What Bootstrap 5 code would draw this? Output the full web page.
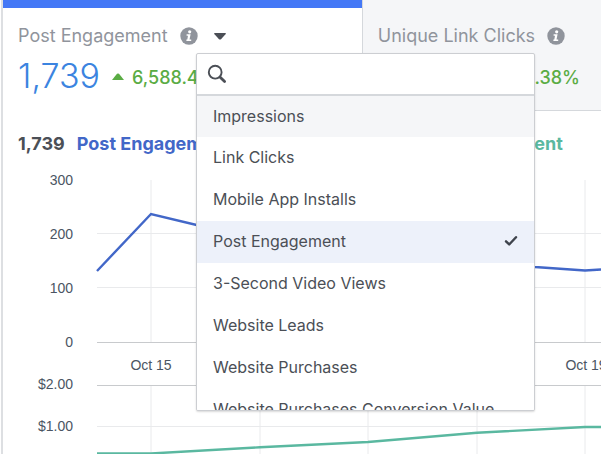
<!DOCTYPE html>
<html lang="en">
<head>
<meta charset="utf-8">
<meta name="viewport" content="width=device-width, initial-scale=1">
<title>Page performance</title>
<link href="https://cdn.jsdelivr.net/npm/bootstrap@5.3.0/dist/css/bootstrap.min.css" rel="stylesheet">
<style>
  body { font-family: Inter, Roboto, sans-serif; color: #4b4f56; height: 100vh; overflow: hidden; }
  .panel { border-left: 2px solid #dddfe2; margin-left: 1px; min-height: 100vh; }
  .metric { padding: 16px 15px 0; height: 111px; line-height: 24px; }
  .metric-main { flex: 0 0 60%; border-top: 8px solid #4478f6; }
  .metric-side { background: #f5f6f8; border-left: 1px solid #d5d8dc; border-bottom: 1px solid #d5d8dc; padding-top: 24px; }
  .metric-name { font-size: 18px; color: #90949c; }
  .metric-value { font-size: 34px; font-weight: 300; line-height: 40px; color: #3b84e0; }
  .metric-change { font-size: 18px; font-weight: 500; color: #5aac44; }
  .side-change { padding-right: 6px; padding-top: 2px; }
  .info-mark { margin-left: 12px; flex-shrink: 0; }
  .menu-toggle { line-height: 0; margin-left: 8px; }
  .metric-menu { top: 45px; left: 193px; width: 339px; height: 358px; border: 1px solid #ccced2; border-radius: 2px; box-shadow: 0 1px 2px rgba(0,0,0,.15); z-index: 5; }
  .menu-search { height: 42px; padding: 0 10px; border-bottom: 2px solid #d5d8dc; }
  .menu-item { height: 42px; padding: 0 16px 2px; border: 0; font-size: 16px; color: #4b4f56; background: #fff; flex-shrink: 0; }
  .item-hover { background: #f5f6f8; }
  .item-chosen { background: #edf1fa; }
  .menu-list .menu-item:first-child { height: 41px; }
  .legend-row { padding: 21px 15px 0; font-size: 18px; line-height: 24px; font-weight: 700; color: #4b4f56; }
  .legend-post { color: #4267c8; margin-left: 12px; }
  .legend-cost { color: #5ab8a0; margin-left: 98px; }
  .chart { display: block; width: 100%; height: 298px; }
  .chart text { font-family: "Liberation Sans", Arial, sans-serif; font-size: 14px; fill: #4b5563; }
</style>
<script src="https://cdn.jsdelivr.net/npm/bootstrap@5.3.0/dist/js/bootstrap.bundle.min.js"></script>
</head>
<body>
<svg class="d-none" aria-hidden="true">
  <symbol id="info" viewBox="0 0 18 18"><circle cx="9" cy="9" r="8.7" fill="#90949c"/><circle cx="9.7" cy="4.8" r="1.6" fill="#fff"/><path d="M6.6 7.3H10.6L9.5 12.4H11.2V14H6.4V12.4H7.3L8 8.8H6.6Z" fill="#fff"/></symbol>
</svg>
<main class="panel">
  <div class="d-flex">
    <section class="metric metric-main position-relative">
      <div class="d-flex align-items-center">
        <span class="metric-name">Post Engagement</span>
        <svg width="18" height="18" class="info-mark" role="img" aria-label="Info"><use href="#info"/></svg>
        <button type="button" class="btn btn-link border-0 p-2 py-1 menu-toggle" aria-label="Change metric" aria-expanded="true">
          <svg width="12" height="7"><path d="M0 .5Q0 0 1 0H11Q12 0 12 .5L11.5 1.3L7 6.2Q6 7 5 6.2L.5 1.3Z" fill="#4b4f56"/></svg>
        </button>
      </div>
      <div class="d-flex align-items-center mt-2">
        <span class="metric-value">1,739</span>
        <svg width="12" height="7" class="info-mark"><path d="M0 7L5 .8Q6 0 7 .8L12 7Z" fill="#5aac44"/></svg>
        <span class="metric-change ms-2 mt-1">6,588.4</span>
      </div>
      <div class="metric-menu position-absolute bg-white d-flex flex-column overflow-hidden">
        <div class="menu-search d-flex align-items-center flex-shrink-0">
          <label for="metricSearch" class="lh-1"><svg width="20" height="20" role="img" aria-label="Search"><circle cx="8.2" cy="8.2" r="6.4" fill="none" stroke="#4b4f56" stroke-width="1.9"/><path d="M13.2 13.2L17.6 17.6" stroke="#4b4f56" stroke-width="2.8" stroke-linecap="round"/></svg></label>
          <input id="metricSearch" type="text" class="form-control border-0 shadow-none bg-transparent py-1">
        </div>
        <div class="menu-list d-flex flex-column overflow-hidden" role="listbox" aria-label="Metrics">
          <button type="button" role="option" class="menu-item item-hover text-start">Impressions</button>
          <button type="button" role="option" class="menu-item text-start">Link Clicks</button>
          <button type="button" role="option" class="menu-item text-start">Mobile App Installs</button>
          <button type="button" role="option" aria-selected="true" class="menu-item item-chosen d-flex align-items-center justify-content-between">Post Engagement
            <svg width="14" height="12"><path d="M2 6.3L5.2 9.5L12 2.2" fill="none" stroke="#3f444c" stroke-width="2.4" stroke-linecap="round" stroke-linejoin="round"/></svg>
          </button>
          <button type="button" role="option" class="menu-item text-start">3-Second Video Views</button>
          <button type="button" role="option" class="menu-item text-start">Website Leads</button>
          <button type="button" role="option" class="menu-item text-start">Website Purchases</button>
          <button type="button" role="option" class="menu-item text-start">Website Purchases Conversion Value</button>
        </div>
      </div>
    </section>
    <section class="metric metric-side flex-grow-1">
      <div class="d-flex align-items-center">
        <span class="metric-name text-nowrap">Unique Link Clicks</span>
        <svg width="18" height="18" class="info-mark" role="img" aria-label="Info"><use href="#info"/></svg>
      </div>
      <div class="metric-change side-change text-end mt-3">.38%</div>
    </section>
  </div>
  <div class="legend-row d-flex text-nowrap">
    <span>1,739</span>
    <span class="legend-post">Post Engagement</span>
    <span class="legend-cost">Cost per Post Engagement</span>
  </div>
  <svg class="chart" role="img" aria-label="Post engagement and cost per engagement by day">
    <g transform="translate(-3 -156)">
      <path d="M97 233.5H2000M97 287.5H2000M97 426.5H2000M151 180V342M260 180V342M368 180V342M477 180V342M585 180V342M151 385V460M260 385V460M368 385V460M477 385V460M585 385V460" stroke="#e9eaec" fill="none"/>
      <path d="M97 342.5H2000M97 385.5H2000" stroke="#c8cacd" fill="none"/>
      <path d="M97 271L151 214L205 227L260 240L368 252L477 261L535 267L585 270.5L601 269.5" stroke="#4267c8" stroke-width="2.4" fill="none"/>
      <path d="M97 453.5H151L260 447.3L368 442L477 432.8L585 427H601" stroke="#5ab8a0" stroke-width="2.4" fill="none"/>
      <g text-anchor="end">
        <text x="73" y="185">300</text><text x="73" y="239">200</text><text x="73" y="293">100</text>
        <text x="73" y="347">0</text><text x="73" y="389">$2.00</text><text x="73" y="431">$1.00</text>
      </g>
      <g text-anchor="middle"><text x="151" y="370">Oct 15</text><text x="586" y="370">Oct 19</text></g>
    </g>
  </svg>
</main>
</body>
</html>
